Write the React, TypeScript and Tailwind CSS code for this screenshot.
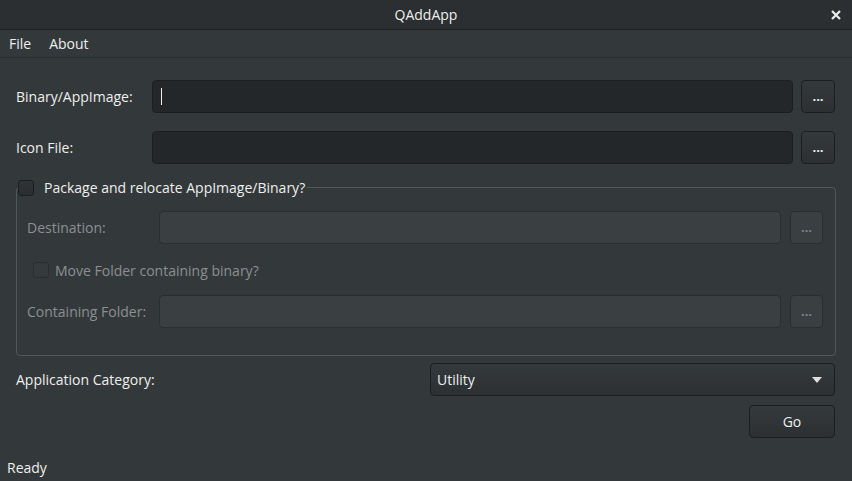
import React from "react";

const font = { fontFamily: '"Open Sans", "Noto Sans", sans-serif' };

function DotsButton({ disabled }: { disabled?: boolean }) {
  return (
    <button
      className={
        disabled
          ? "w-[33px] h-[33px] shrink-0 rounded-[4px] border border-[#2a2e30] bg-[#3a3f42] text-[#7d8283] text-[13px] leading-none flex items-center justify-center"
          : "w-[34px] h-[33px] shrink-0 rounded-[4px] border border-[#1c1f20] bg-gradient-to-b from-[#34393b] to-[#2c3032] text-[#eeeeec] text-[13px] leading-none flex items-center justify-center"
      }
    >
      <span className="font-bold tracking-[0px]">...</span>
    </button>
  );
}

function Checkbox({ disabled }: { disabled?: boolean }) {
  return (
    <span
      className={
        disabled
          ? "inline-block w-[16px] h-[16px] rounded-[3px] border border-[#2a2e30] bg-[#353a3c]"
          : "inline-block w-[16px] h-[16px] rounded-[3px] border border-[#1c1f20] bg-gradient-to-b from-[#2f3436] to-[#2a2e30]"
      }
    />
  );
}

export default function App() {
  return (
    <div
      className="w-[852px] h-[481px] flex flex-col bg-[#33393b] text-[#eeeeec] text-[14px] overflow-hidden"
      style={font}
    >
      {/* Title bar */}
      <div className="h-[30px] shrink-0 relative flex items-center justify-center bg-[#2b2f31] border-b border-[#1c1f20]">
        <span className="text-[14px] text-[#eeeeec]">QAddApp</span>
        <svg
          className="absolute right-[11px] top-[10px]"
          width="10"
          height="10"
          viewBox="0 0 10 10"
        >
          <path d="M1 1 L9 9 M9 1 L1 9" stroke="#eeeeec" strokeWidth="2.2" />
        </svg>
      </div>

      {/* Menu bar */}
      <div className="h-[28px] shrink-0 flex items-center gap-[18px] pl-[9px] border-b border-[#2b2f31]">
        <span>File</span>
        <span>About</span>
      </div>

      {/* Content */}
      <div className="flex-1 flex flex-col pl-[16px] pr-[17px] pt-[22px]">
        <div className="flex items-center h-[33px]">
          <span className="w-[136px] shrink-0">Binary/AppImage:</span>
          <div className="flex-1 h-[33px] rounded-[4px] border border-[#1c1f20] bg-[#232729] flex items-center pl-[8px]">
            <span className="w-[1px] h-[17px] bg-[#eeeeec]" />
          </div>
          <div className="w-[8px]" />
          <DotsButton />
        </div>

        <div className="flex items-center h-[33px] mt-[18px]">
          <span className="w-[136px] shrink-0">Icon File:</span>
          <div className="flex-1 h-[33px] rounded-[4px] border border-[#1c1f20] bg-[#232729]" />
          <div className="w-[8px]" />
          <DotsButton />
        </div>

        <fieldset className="mt-[13px] border border-[#52575a] rounded-[4px] pl-[10px] pr-[12px] pb-[27px] mr-[-1px]">
          <legend className="ml-[-9px] flex items-center gap-[10px] pr-[2px]">
            <Checkbox />
            <span>Package and relocate AppImage/Binary?</span>
          </legend>

          <div className="flex items-center h-[33px] mt-[13px] text-[#8b8f90]">
            <span className="w-[132px] shrink-0">Destination:</span>
            <div className="flex-1 h-[33px] rounded-[4px] border border-[#2a2e30] bg-[#3a3f42]" />
            <div className="w-[9px]" />
            <DotsButton disabled />
          </div>

          <div className="flex items-center h-[16px] mt-[18px] pl-[6px] gap-[6px] text-[#8b8f90]">
            <Checkbox disabled />
            <span>Move Folder containing binary?</span>
          </div>

          <div className="flex items-center h-[33px] mt-[17px] text-[#8b8f90]">
            <span className="w-[132px] shrink-0">Containing Folder:</span>
            <div className="flex-1 h-[33px] rounded-[4px] border border-[#2a2e30] bg-[#3a3f42]" />
            <div className="w-[9px]" />
            <DotsButton disabled />
          </div>
        </fieldset>

        <div className="flex items-center h-[33px] mt-[7px]">
          <span className="flex-1">Application Category:</span>
          <div className="w-[405px] h-[33px] rounded-[4px] border border-[#1c1f20] bg-gradient-to-b from-[#34393b] to-[#2c3032] flex items-center pl-[6px] pr-[12px]">
            <span className="flex-1">Utility</span>
            <svg width="10" height="6" viewBox="0 0 10 6">
              <path d="M0 0 L10 0 L5 6 Z" fill="#e0e0e0" />
            </svg>
          </div>
        </div>

        <div className="flex justify-end mt-[9px]">
          <button className="w-[86px] h-[33px] rounded-[4px] border border-[#1c1f20] bg-gradient-to-b from-[#34393b] to-[#2c3032] text-[#eeeeec] text-[14px]">
            Go
          </button>
        </div>

        <div className="flex-1" />
      </div>

      <div className="h-[27px] shrink-0 flex items-center pl-[7px]">Ready</div>
    </div>
  );
}
